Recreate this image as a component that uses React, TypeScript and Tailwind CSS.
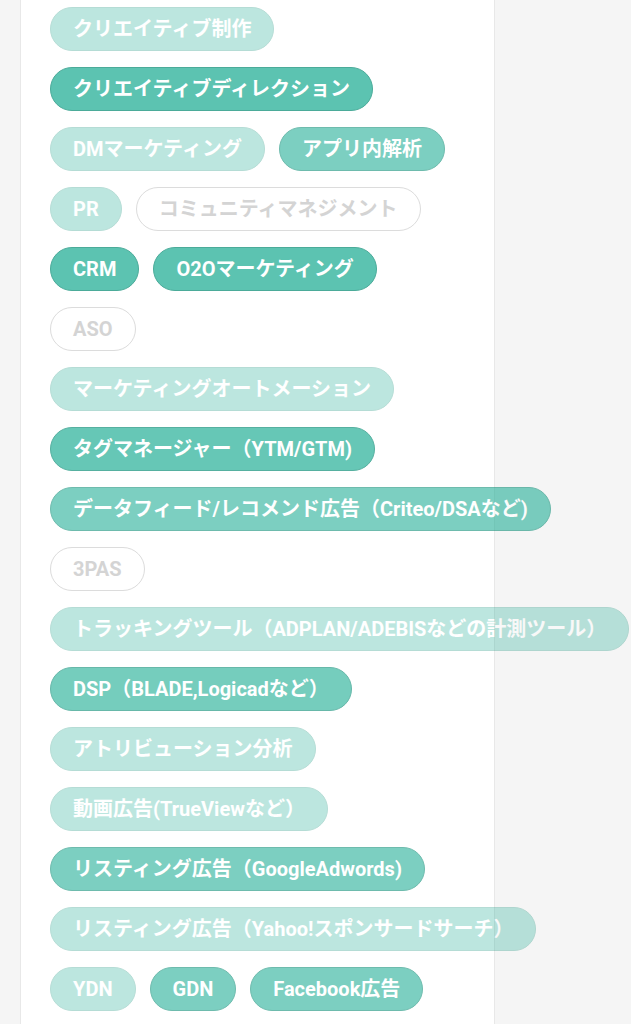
type Tone = 'dark' | 'mid' | 'light' | 'off';

interface Tag {
  label: string;
  tone: Tone;
  alpha?: number;
}

const tags: Tag[] = [
  { label: 'クリエイティブ制作', tone: 'light' },
  { label: 'クリエイティブディレクション', tone: 'dark' },
  { label: 'DMマーケティング', tone: 'light' },
  { label: 'アプリ内解析', tone: 'mid' },
  { label: 'PR', tone: 'light' },
  { label: 'コミュニティマネジメント', tone: 'off' },
  { label: 'CRM', tone: 'dark' },
  { label: 'O2Oマーケティング', tone: 'dark' },
  { label: 'ASO', tone: 'off' },
  { label: 'マーケティングオートメーション', tone: 'light' },
  { label: 'タグマネージャー（YTM/GTM)', tone: 'dark', alpha: 0.7 },
  { label: 'データフィード/レコメンド広告（Criteo/DSAなど)', tone: 'mid' },
  { label: '3PAS', tone: 'off' },
  { label: 'トラッキングツール（ADPLAN/ADEBISなどの計測ツール）', tone: 'light' },
  { label: 'DSP（BLADE,Logicadなど）', tone: 'mid', alpha: 0.63 },
  { label: 'アトリビューション分析', tone: 'light' },
  { label: '動画広告(TrueViewなど）', tone: 'light' },
  { label: 'リスティング広告（GoogleAdwords)', tone: 'mid' },
  { label: 'リスティング広告（Yahoo!スポンサードサーチ）', tone: 'light' },
  { label: 'YDN', tone: 'light' },
  { label: 'GDN', tone: 'mid' },
  { label: 'Facebook広告', tone: 'mid' },
];

const toneAlpha: Record<Tone, number> = {
  dark: 0.75,
  mid: 0.6,
  light: 0.3,
  off: 1,
};

function TagPill({ tag }: { tag: Tag }) {
  if (tag.tone === 'off') {
    return (
      <span className="whitespace-nowrap rounded-full border border-[#dcdcdc] bg-white px-[22px] py-[7px] text-[20px] leading-[28px] font-bold text-[#d4d4d4]">
        {tag.label}
      </span>
    );
  }
  const alpha = tag.alpha ?? toneAlpha[tag.tone];
  return (
    <span
      className="whitespace-nowrap rounded-full border border-[#0f8f78] bg-[#26b098] px-[22px] py-[7px] text-[20px] leading-[28px] font-bold text-white"
      style={{ opacity: alpha }}
    >
      {tag.label}
    </span>
  );
}

export default function App() {
  return (
    <div
      className="min-h-screen overflow-hidden bg-[#f5f5f5] pl-[20px]"
      style={{ fontFamily: 'Roboto, "Noto Sans CJK JP", sans-serif' }}
    >
      <div className="min-h-screen w-[475px] border-x border-[#e8e8e8] bg-white px-[29px] pt-[7px] pb-6">
        {/* skill tags */}
        <div className="flex flex-wrap gap-x-[14px] gap-y-4">
          {tags.map((tag) => (
            <TagPill key={tag.label} tag={tag} />
          ))}
        </div>
      </div>
    </div>
  );
}
